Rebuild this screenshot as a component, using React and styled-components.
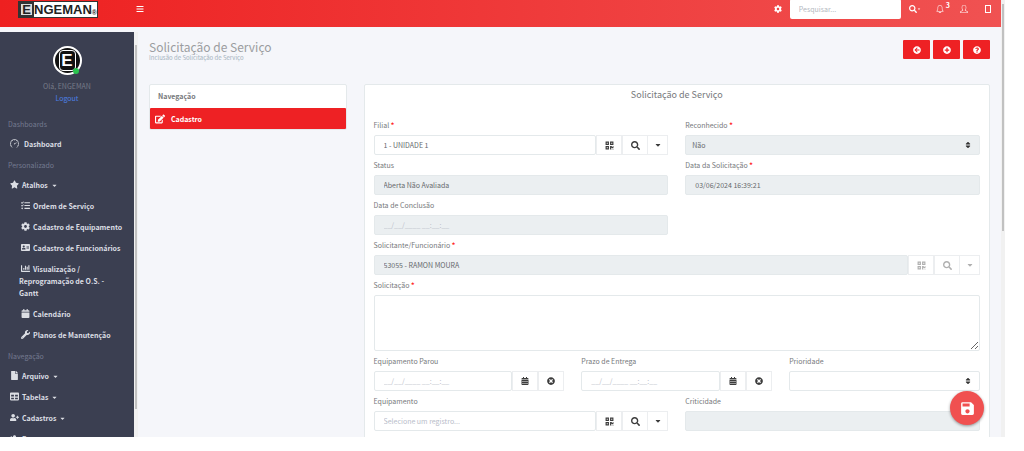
import React from 'react';
import styled, { createGlobalStyle, css } from 'styled-components';
import {
  FaAddressCard,
  FaArrowCircleLeft,
  FaBars,
  FaCalendar,
  FaCalendarAlt,
  FaCaretDown,
  FaChartBar,
  FaCog,
  FaEdit,
  FaFile,
  FaPlusCircle,
  FaQrcode,
  FaQuestionCircle,
  FaSearch,
  FaSort,
  FaStar,
  FaTable,
  FaTasks,
  FaTimesCircle,
  FaUserPlus,
  FaUsersCog,
  FaWrench,
} from 'react-icons/fa';
import { SlBell, SlSpeedometer, SlUser } from 'react-icons/sl';
import { MdSave } from 'react-icons/md';

const COLORS = {
  red: '#ee2124',
  sidebar: '#3b3f51',
  page: '#f5f6fa',
  border: '#e4e9eb',
  disabled: '#ebeff1',
  text: '#76787b',
  control: '#66696c',
};

const GlobalStyle = createGlobalStyle`
  * {
    box-sizing: border-box;
  }

  body {
    margin: 0;
    background: #fff;
    color: ${COLORS.text};
    font-family: 'Noto Sans CJK SC', 'Open Sans', sans-serif;
    font-size: 7px;
    line-height: 12px;
  }

  button, input, select, textarea {
    font: inherit;
    color: inherit;
  }

  svg {
    display: block;
    flex: none;
  }
`;

// Estrutura da página
const Shell = styled.div`
  position: relative;
  display: flex;
  height: calc(100vh - 14px);
  margin-right: 19px;
  overflow: hidden;
  background: ${COLORS.page};
`;

const Page = styled.div`
  flex: 1;
  min-width: 0;
  display: flex;
  flex-direction: column;
`;

const ScrollTrack = styled.div`
  flex: none;
  width: 4px;
  padding: ${(props) => props.$pad} 1px;
  background: #f1f1f1;
`;

const ScrollThumb = styled.div`
  height: ${(props) => props.$size};
  background: #c1c1c1;
`;

// Barra superior
const TopBar = styled.header`
  flex: none;
  display: flex;
  align-items: center;
  height: 27px;
  padding: 0 7px 9px 18px;
  color: #fff;
  background: linear-gradient(90deg, #ee2020, #f05252);
`;

const Logo = styled.a`
  display: flex;
  align-items: center;
  height: 17px;
  margin: 0 38px 0 0;
  border: 1px solid #333;
  background: #fff;
  color: #222;
  text-decoration: none;
  font: bold 13px/15px 'Liberation Sans', Arial, sans-serif;
`;

const LogoLetter = styled.span`
  width: 15px;
  height: 15px;
  border: 2px solid #333;
  background: #ddd;
  line-height: 11px;
  text-align: center;
`;

const LogoMark = styled.small`
  align-self: flex-end;
  font-size: 7px;
  line-height: 8px;
`;

const IconButton = styled.button`
  display: flex;
  align-items: center;
  padding: 0;
  border: 0;
  background: none;
  cursor: pointer;
`;

const Tools = styled.div`
  display: flex;
  align-items: center;
  height: 18px;
  margin-left: auto;
`;

const SearchInput = styled.input`
  width: 111px;
  height: 20px;
  margin: 0 8px;
  padding: 0 9px;
  border: 0;
  border-radius: 2px;
  background: #fff;
  color: ${COLORS.control};

  &::placeholder {
    color: #b4b8c0;
  }
`;

const ToolIcons = styled.div`
  display: flex;
  align-items: center;
  gap: 10px;
`;

const Alerts = styled(IconButton)`
  align-items: flex-start;
  margin-left: 5px;

  sup {
    font-size: 7px;
    line-height: 7px;
    font-weight: bold;
    margin: -3px 0 0 2px;
  }
`;

const Body = styled.div`
  flex: 1;
  min-height: 0;
  display: flex;
`;

// Menu lateral
const SidebarWrap = styled.div`
  flex: none;
  display: flex;
  width: 138px;
  margin-top: 5px;
  overflow: hidden;
`;

const Sidebar = styled.nav`
  flex: 1;
  overflow: hidden;
  background: ${COLORS.sidebar};
  color: #dcdee4;
`;

const Profile = styled.div`
  display: flex;
  flex-direction: column;
  align-items: center;
  height: 82px;
  padding-top: 14px;
  color: #777b88;
`;

const Avatar = styled.div`
  position: relative;
  width: 29px;
  height: 29px;
  margin-bottom: 5px;
  border: 2px solid #fff;
  border-radius: 50%;
  background: #111;
  color: #fff;
  font: bold 17px/25px 'Liberation Sans', Arial, sans-serif;
  text-align: center;
`;

const AvatarFrame = styled.span`
  display: block;
  width: 17px;
  height: 21px;
  margin: 2px auto;
  border: 1px solid #fff;
  border-radius: 4px;
  line-height: 19px;
`;

const Online = styled.i`
  position: absolute;
  right: 1px;
  bottom: -1px;
  width: 6px;
  height: 6px;
  border-radius: 50%;
  background: #2bc44f;
`;

const Logout = styled.a`
  color: #4c7fe6;
  text-decoration: none;
`;

const SectionTitle = styled.h2`
  margin: 0;
  padding: 4px 8px;
  color: #747a90;
  font-size: 7px;
  font-weight: normal;
  line-height: 12px;
`;

const MenuLink = styled.a`
  display: block;
  padding: 4px ${(props) => (props.$nested ? '11px 5px 19px' : '8px 5px 10px')};
  color: inherit;
  font-weight: bold;
  text-decoration: none;

  svg {
    display: inline-block;
    vertical-align: -1px;
    margin: 0 ${(props) => (props.$wide ? '5px' : '3px')} 0 ${(props) => (props.$nested ? '2px' : '0')};
  }

  span + svg {
    margin: 0 0 0 3px;
  }
`;

// Conteúdo
const Content = styled.main`
  flex: 1;
  min-width: 0;
  padding: 13px 11px 0;
  overflow: hidden;
`;

const Heading = styled.div`
  display: flex;
  justify-content: space-between;
  height: 44px;
`;

const Title = styled.h1`
  margin: 0;
  color: #9b9da0;
  font-size: 12px;
  font-weight: normal;
  line-height: 14px;
`;

const Subtitle = styled.p`
  margin: 0;
  color: #a5b3be;
  font-size: 6px;
  line-height: 8px;
`;

const Actions = styled.div`
  display: flex;
  gap: 3px;
`;

const ActionButton = styled.button`
  display: flex;
  align-items: center;
  justify-content: center;
  width: 27px;
  height: 19px;
  padding: 0;
  border: 0;
  border-radius: 1px;
  background: ${COLORS.red};
  color: #fff;
`;

const Columns = styled.div`
  display: grid;
  grid-template-columns: repeat(12, minmax(0, 1fr));
  column-gap: 17px;
  align-items: start;
`;

const Card = styled.section`
  grid-column: span ${(props) => props.$span};
  border: 1px solid ${COLORS.border};
  border-radius: 2px;
  background: #fff;
`;

const CardTitle = styled.h3`
  margin: 0;
  padding: 0 8px;
  font-size: 7px;
  font-weight: bold;
  line-height: 23px;
`;

const CardLink = styled.a`
  display: flex;
  align-items: center;
  gap: 6px;
  height: 21px;
  padding: 0 5px;
  border-radius: 1px;
  background: ${COLORS.red};
  color: #fff;
  font-weight: bold;
  text-decoration: none;
`;

const Form = styled.form`
  padding: 0 9px 20px;
`;

const FormTitle = styled.h2`
  margin: 0 0 10px;
  font-size: 9px;
  font-weight: normal;
  line-height: 20px;
  text-align: center;
`;

const Row = styled.div`
  display: grid;
  grid-template-columns: repeat(${(props) => props.$cols}, minmax(0, 1fr));
  column-gap: 17px;
`;

const Label = styled.label`
  display: block;
  line-height: 20px;
`;

const Required = styled.span`
  color: #f22;
  font-weight: bold;
`;

const Group = styled.div`
  position: relative;
  display: flex;
`;

const control = css`
  flex: 1;
  display: block;
  width: 100%;
  min-width: 0;
  height: 20px;
  padding: 0 9px;
  border: 1px solid ${COLORS.border};
  border-radius: 2px;
  outline: 0;
  background: #fff;
  color: ${COLORS.control};
  opacity: 1;

  &:disabled {
    background: ${COLORS.disabled};
  }
`;

const TextInput = styled.input`
  ${control}

  &::placeholder {
    color: #b9bdc9;
  }
`;

const Select = styled.select`
  ${control}
  padding: 0 6px;
  appearance: none;
`;

const SelectArrow = styled(FaSort)`
  position: absolute;
  right: 8px;
  top: 6px;
  color: #333;
  pointer-events: none;
`;

const TextArea = styled.textarea`
  ${control}
  height: 56px;
  resize: vertical;
`;

const AddOn = styled.button`
  display: flex;
  align-items: center;
  justify-content: center;
  width: ${(props) => (props.$narrow ? '20px' : '26px')};
  height: 20px;
  padding: 0;
  border: 1px solid #eceef0;
  border-left-width: ${(props) => (props.$narrow ? '0' : '1px')};
  background: #fff;
  color: #3c3c3c;

  &:disabled {
    color: #b0b0b0;
  }
`;

const SaveButton = styled.button`
  position: absolute;
  right: 21px;
  bottom: 12px;
  display: flex;
  align-items: center;
  justify-content: center;
  width: 34px;
  height: 34px;
  padding: 0;
  border: 0;
  border-radius: 50%;
  background: #f05050;
  box-shadow: 0 1px 3px rgba(0, 0, 0, 0.4);
  color: #fff;
`;

const MASK = '__/__/____ __:__:__';

const SHORTCUTS = [
  { icon: FaTasks, label: 'Ordem de Serviço' },
  { icon: FaCog, label: 'Cadastro de Equipamento' },
  { icon: FaAddressCard, label: 'Cadastro de Funcionários' },
  { icon: FaChartBar, label: 'Visualização / Reprogramação de O.S. - Gantt' },
  { icon: FaCalendar, label: 'Calendário' },
  { icon: FaWrench, label: 'Planos de Manutenção' },
];

const MODULES = [
  { icon: FaFile, label: 'Arquivo' },
  { icon: FaTable, label: 'Tabelas' },
  { icon: FaUserPlus, label: 'Cadastros' },
  { icon: FaUsersCog, label: 'Processos' },
];

const MenuItem = ({ icon: Icon, label, nested, caret, wide }) => (
  <MenuLink href="#" $nested={nested} $wide={wide}>
    <Icon size={9} />
    <span>{label}</span>
    {caret && <FaCaretDown size={7} />}
  </MenuLink>
);

const Field = ({ id, label, required, children }) => (
  <div>
    <Label htmlFor={id}>
      {label} {required && <Required>*</Required>}
    </Label>
    <Group>{children}</Group>
  </div>
);

// Campo com busca de registro
const LookupField = ({ disabled, value, placeholder, ...props }) => (
  <Field {...props}>
    <TextInput id={props.id} defaultValue={value} placeholder={placeholder} disabled={disabled} />
    <AddOn type="button" aria-label="Ler código" disabled={disabled}>
      <FaQrcode size={9} />
    </AddOn>
    <AddOn type="button" aria-label="Pesquisar" disabled={disabled}>
      <FaSearch size={9} />
    </AddOn>
    <AddOn type="button" aria-label="Mais opções" disabled={disabled} $narrow>
      <FaCaretDown size={8} />
    </AddOn>
  </Field>
);

const DateField = (props) => (
  <Field {...props}>
    <TextInput id={props.id} placeholder={MASK} />
    <AddOn type="button" aria-label="Abrir calendário">
      <FaCalendarAlt size={8} />
    </AddOn>
    <AddOn type="button" aria-label="Limpar">
      <FaTimesCircle size={8} />
    </AddOn>
  </Field>
);

const SelectField = ({ options, disabled, ...props }) => (
  <Field {...props}>
    <Select id={props.id} disabled={disabled}>
      {options.map((option) => (
        <option key={option}>{option}</option>
      ))}
    </Select>
    <SelectArrow size={8} />
  </Field>
);

const App = () => {
  return (
    <>
      <GlobalStyle />
      <Shell>
        <Page>
          <TopBar>
            <Logo href="#">
              <LogoLetter>E</LogoLetter>
              NGEMAN
              <LogoMark>®</LogoMark>
            </Logo>
            <IconButton aria-label="Menu">
              <FaBars size={8} />
            </IconButton>
            <Tools>
              <IconButton aria-label="Configurações">
                <FaCog size={8} />
              </IconButton>
              <SearchInput placeholder="Pesquisar..." aria-label="Pesquisar" />
              <ToolIcons>
                <IconButton aria-label="Buscar">
                  <FaSearch size={8} />
                  <FaCaretDown size={4} />
                </IconButton>
                <Alerts aria-label="Notificações">
                  <SlBell size={8} />
                  <sup>3</sup>
                </Alerts>
                <IconButton aria-label="Usuário">
                  <SlUser size={8} />
                </IconButton>
                <IconButton aria-label="Painel">
                  <svg width="16" height="9" viewBox="0 0 16 9" fill="none" stroke="currentColor">
                    <rect x="7.5" y="0.5" width="5" height="7" />
                  </svg>
                </IconButton>
              </ToolIcons>
            </Tools>
          </TopBar>

          <Body>
            <SidebarWrap>
              <Sidebar>
                <Profile>
                  <Avatar>
                    <AvatarFrame>E</AvatarFrame>
                    <Online />
                  </Avatar>
                  <span>Olá, ENGEMAN</span>
                  <Logout href="#">Logout</Logout>
                </Profile>
                <SectionTitle>Dashboards</SectionTitle>
                <MenuItem icon={SlSpeedometer} label="Dashboard" wide />
                <SectionTitle>Personalizado</SectionTitle>
                <MenuItem icon={FaStar} label="Atalhos" caret />
                {SHORTCUTS.map((item) => (
                  <MenuItem key={item.label} {...item} nested />
                ))}
                <SectionTitle>Navegação</SectionTitle>
                {MODULES.map((item) => (
                  <MenuItem key={item.label} {...item} caret />
                ))}
              </Sidebar>
              <ScrollTrack $pad="13px">
                <ScrollThumb $size="96%" />
              </ScrollTrack>
            </SidebarWrap>

            <Content>
              <Heading>
                <div>
                  <Title>Solicitação de Serviço</Title>
                  <Subtitle>Inclusão de Solicitação de Serviço</Subtitle>
                </div>
                <Actions>
                  <ActionButton aria-label="Voltar">
                    <FaArrowCircleLeft size={8} />
                  </ActionButton>
                  <ActionButton aria-label="Novo">
                    <FaPlusCircle size={8} />
                  </ActionButton>
                  <ActionButton aria-label="Ajuda">
                    <FaQuestionCircle size={8} />
                  </ActionButton>
                </Actions>
              </Heading>

              <Columns>
                <Card $span={3}>
                  <CardTitle>Navegação</CardTitle>
                  <CardLink href="#">
                    <FaEdit size={10} />
                    Cadastro
                  </CardLink>
                </Card>

                <Card $span={9}>
                  <Form>
                    <FormTitle>Solicitação de Serviço</FormTitle>
                    <Row $cols={2}>
                      <LookupField id="filial" label="Filial" value="1 - UNIDADE 1" required />
                      <SelectField id="reconhecido" label="Reconhecido" options={['Não', 'Sim']} disabled required />
                      <Field id="status" label="Status">
                        <TextInput id="status" defaultValue="Aberta Não Avaliada" disabled />
                      </Field>
                      <Field id="data" label="Data da Solicitação" required>
                        <TextInput id="data" defaultValue="03/06/2024 16:39:21" disabled />
                      </Field>
                      <Field id="conclusao" label="Data de Conclusão">
                        <TextInput id="conclusao" placeholder={MASK} disabled />
                      </Field>
                    </Row>
                    <Row $cols={1}>
                      <LookupField
                        id="solicitante"
                        label="Solicitante/Funcionário"
                        value="53055 - RAMON MOURA"
                        disabled
                        required
                      />
                      <Field id="solicitacao" label="Solicitação" required>
                        <TextArea id="solicitacao" />
                      </Field>
                    </Row>
                    <Row $cols={3}>
                      <DateField id="parou" label="Equipamento Parou" />
                      <DateField id="prazo" label="Prazo de Entrega" />
                      <SelectField id="prioridade" label="Prioridade" options={['']} />
                    </Row>
                    <Row $cols={2}>
                      <LookupField id="equipamento" label="Equipamento" placeholder="Selecione um registro..." />
                      <Field id="criticidade" label="Criticidade">
                        <TextInput id="criticidade" disabled />
                      </Field>
                    </Row>
                  </Form>
                </Card>
              </Columns>
            </Content>
          </Body>
        </Page>
        <ScrollTrack $pad="4px">
          <ScrollThumb $size="53%" />
        </ScrollTrack>
        <SaveButton aria-label="Salvar">
          <MdSave size={17} />
        </SaveButton>
      </Shell>
    </>
  );
};

export default App;
